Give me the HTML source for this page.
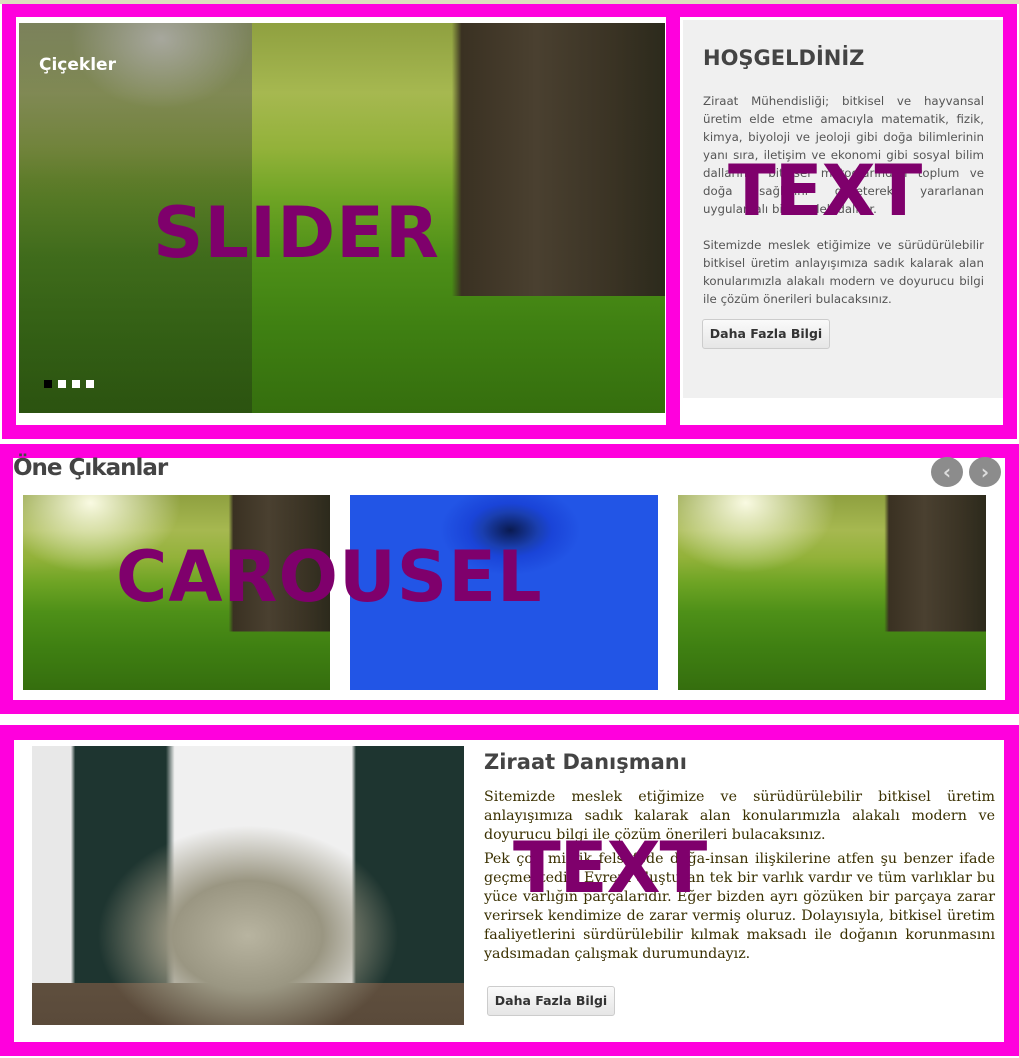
<!DOCTYPE html>
<html><head><meta charset="utf-8">
<style>
*{margin:0;padding:0;box-sizing:border-box}
body{width:1019px;height:1058px;background:#fff;position:relative;overflow:hidden;font-family:"Liberation Sans","DejaVu Sans",sans-serif}
.a{position:absolute}
.mag{background:#ff00dd}
.ov{position:absolute;font-family:"DejaVu Sans",sans-serif;font-weight:bold;color:#7f006c;font-size:70px;line-height:1;letter-spacing:1px}
.btn{position:absolute;background:linear-gradient(#fafafa,#e6e6e6);border:1px solid #ccc;border-radius:3px;font:bold 12.5px "DejaVu Sans",sans-serif;color:#333;text-align:center}
.meadow{background:
radial-gradient(ellipse 90px 70px at 22% 4%,rgba(255,255,235,.95),rgba(255,255,200,0) 100%),
linear-gradient(90deg,rgba(0,0,0,0) 0,rgba(0,0,0,0) 67%,#3a3122 68.5%,#4a4030 80%,#3a3324 92%,#2c2a1c 100%) top/100% 70% no-repeat,
linear-gradient(180deg,#8fa040 0%,#a6b850 18%,#93b23a 32%,#6ea424 45%,#4e9018 60%,#3f8012 78%,#356e0e 100%)}
.jp{text-align:justify}
</style></head><body>
<div class="a" style="left:0;top:0;width:1019px;height:4px;background:#dcdcc0"></div>
<div class="a mag" style="left:2px;top:4px;width:1015px;height:435px"></div>
<div class="a" style="left:16px;top:17px;width:650px;height:408px;background:#fff"></div>
<div class="a meadow" style="left:19px;top:23px;width:646px;height:390px"></div>
<div class="a" style="left:19px;top:23px;width:233px;height:390px;background:linear-gradient(rgba(110,110,110,.6),rgba(40,40,40,.35) 40%,rgba(20,20,20,.3))"></div>
<div class="a" style="left:39px;top:55px;color:#fff;font:bold 17px 'DejaVu Sans',sans-serif">Çiçekler</div>
<div class="a" style="left:44px;top:380px;width:8px;height:8px;background:#000"></div>
<div class="a" style="left:58px;top:380px;width:8px;height:8px;background:#fff"></div>
<div class="a" style="left:72px;top:380px;width:8px;height:8px;background:#fff"></div>
<div class="a" style="left:86px;top:380px;width:8px;height:8px;background:#fff"></div>
<div class="a" style="left:680px;top:17px;width:323px;height:408px;background:#fff"></div>
<div class="a" style="left:683px;top:20px;width:320px;height:378px;background:#f0f0f0"></div>
<div class="a" style="left:703px;top:46px;font:bold 21px 'DejaVu Sans',sans-serif;color:#444">HOŞGELDİNİZ</div>
<div class="a jp" style="left:703px;top:92px;width:281px;font:11.8px/18px 'DejaVu Sans',sans-serif;color:#555">Ziraat Mühendisliği; bitkisel ve hayvansal üretim elde etme amacıyla matematik, fizik, kimya, biyoloji ve jeoloji gibi doğa bilimlerinin yanı sıra, iletişim ve ekonomi gibi sosyal bilim dallarının bitkisel metodlarından toplum ve doğa sağlığını gözeterek yararlanan uygulamalı bir meslek dalıdır.</div>
<div class="a jp" style="left:703px;top:236px;width:281px;font:11.8px/18px 'DejaVu Sans',sans-serif;color:#555">Sitemizde meslek etiğimize ve sürüdürülebilir bitkisel üretim anlayışımıza sadık kalarak alan konularımızla alakalı modern ve doyurucu bilgi ile çözüm önerileri bulacaksınız.</div>
<div class="btn" style="left:702px;top:319px;width:128px;height:30px;line-height:28px">Daha Fazla Bilgi</div>
<div class="ov" style="left:153px;top:198px">SLIDER</div>
<div class="ov" style="left:728px;top:156px;letter-spacing:-1px">TEXT</div>
<div class="a mag" style="left:0;top:444px;width:1019px;height:270px"></div>
<div class="a" style="left:13px;top:458px;width:992px;height:242px;background:#fff"></div>
<div class="a" style="left:13px;top:455px;font:bold 23px 'DejaVu Sans',sans-serif;color:#444;letter-spacing:-1px">Öne Çıkanlar</div>
<div class="a" style="left:931px;top:457px;width:32px;height:30px;border-radius:50%;background:#8c8c8c;color:#ddd;text-align:center;font:bold 20px/30px 'DejaVu Sans'">‹</div>
<div class="a" style="left:969px;top:457px;width:32px;height:30px;border-radius:50%;background:#8c8c8c;color:#ddd;text-align:center;font:bold 20px/30px 'DejaVu Sans'">›</div>
<div class="a meadow" style="left:23px;top:495px;width:307px;height:195px"></div>
<div class="a" style="left:350px;top:495px;width:308px;height:195px;background:radial-gradient(ellipse 70px 45px at 52% 18%,#0a1a50 0,#1a3fb0 40%,#1a44d8 60%,#2255e6 100%)"></div>
<div class="a meadow" style="left:678px;top:495px;width:308px;height:195px"></div>
<div class="ov" style="left:116px;top:542px">CAROUSEL</div>
<div class="a mag" style="left:0;top:725px;width:1019px;height:331px"></div>
<div class="a" style="left:14px;top:740px;width:990px;height:302px;background:#fff"></div>
<div class="a" style="left:32px;top:746px;width:432px;height:279px;background:
radial-gradient(ellipse 150px 110px at 50% 68%,#b8b4a0 0,#9a9682 50%,rgba(0,0,0,0) 100%),
linear-gradient(90deg,#e8e8e8 0,#e8e8e8 9%,#1e3530 10%,#1e3530 31%,#f0f0f0 33%,#f0f0f0 74%,#1e3530 75%,#1e3530 100%) top/100% 85% no-repeat,
linear-gradient(#7a6a55,#5a4a3a)"></div>
<div class="a" style="left:484px;top:750px;font:bold 21px 'DejaVu Sans',sans-serif;color:#444">Ziraat Danışmanı</div>
<div class="a jp" style="left:484px;top:788px;width:511px;font:14.2px/19px 'DejaVu Serif',serif;color:#3a3000">Sitemizde meslek etiğimize ve sürüdürülebilir bitkisel üretim anlayışımıza sadık kalarak alan konularımızla alakalı modern ve doyurucu bilgi ile çözüm önerileri bulacaksınız.</div>
<div class="a jp" style="left:484px;top:850px;width:511px;font:14.2px/19px 'DejaVu Serif',serif;color:#3a3000">Pek çok mistik felsefede doğa-insan ilişkilerine atfen şu benzer ifade geçmektedir: Evreni oluşturan tek bir varlık vardır ve tüm varlıklar bu yüce varlığın parçalarıdır. Eğer bizden ayrı gözüken bir parçaya zarar verirsek kendimize de zarar vermiş oluruz. Dolayısıyla, bitkisel üretim faaliyetlerini sürdürülebilir kılmak maksadı ile doğanın korunmasını yadsımadan çalışmak durumundayız.</div>
<div class="btn" style="left:487px;top:986px;width:128px;height:30px;line-height:28px">Daha Fazla Bilgi</div>
<div class="ov" style="left:513px;top:833px;letter-spacing:-1px">TEXT</div>
</body></html>
